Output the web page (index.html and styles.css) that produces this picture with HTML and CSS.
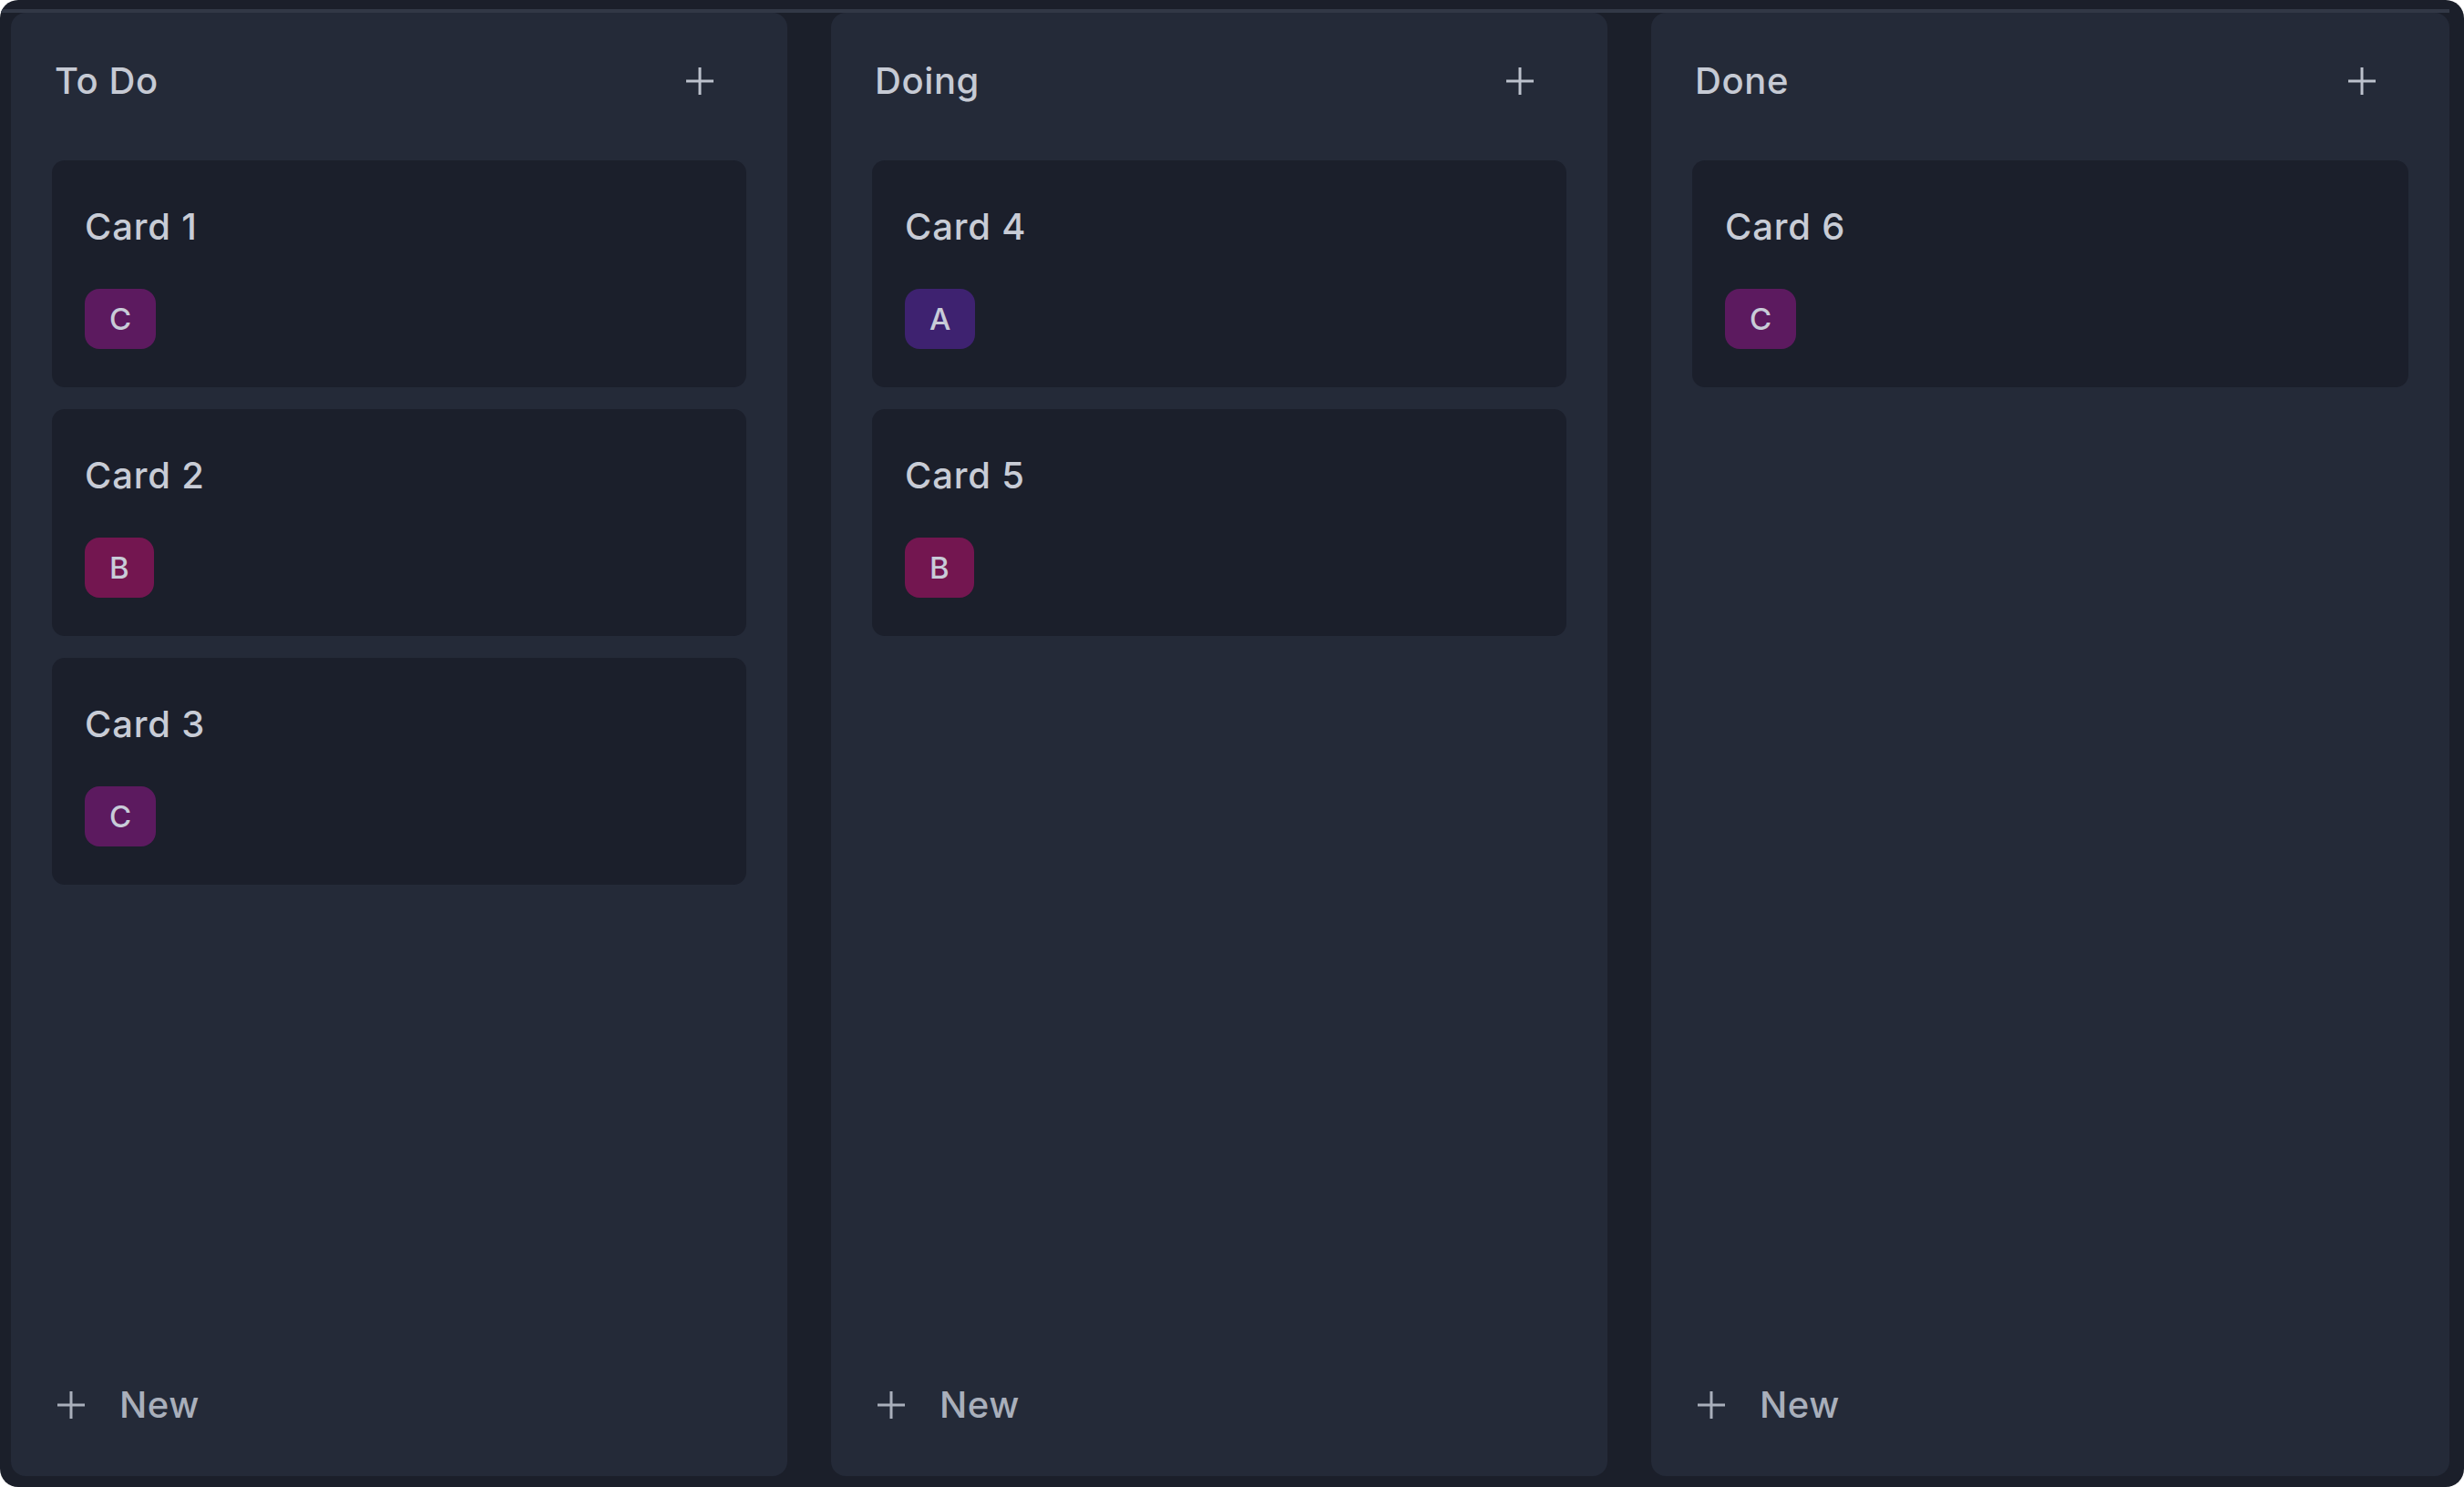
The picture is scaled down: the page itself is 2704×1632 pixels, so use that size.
FILE: index.html
```html
<!DOCTYPE html>
<html lang="en">
<head>
<meta charset="utf-8">
<title>Board</title>
<link rel="stylesheet" href="styles.css">
</head>
<body>
<div class="app">
  <div class="rule"></div>
  <div class="board">
    <section class="column">
      <header class="col-head">
        <h2 class="col-title">To Do</h2>
        <button class="icon-btn" aria-label="Add"><svg viewBox="0 0 32 32" width="32" height="32"><path d="M16 1v30M1 16h30"/></svg></button>
      </header>
      <div class="cards">
        <article class="card"><h3 class="card-title">Card 1</h3><span class="badge badge-c">C</span></article>
        <article class="card"><h3 class="card-title">Card 2</h3><span class="badge badge-b">B</span></article>
        <article class="card"><h3 class="card-title">Card 3</h3><span class="badge badge-c">C</span></article>
      </div>
      <button class="new-btn"><svg viewBox="0 0 32 32" width="32" height="32"><path d="M16 1v30M1 16h30"/></svg><span>New</span></button>
    </section>
    <section class="column">
      <header class="col-head">
        <h2 class="col-title">Doing</h2>
        <button class="icon-btn" aria-label="Add"><svg viewBox="0 0 32 32" width="32" height="32"><path d="M16 1v30M1 16h30"/></svg></button>
      </header>
      <div class="cards">
        <article class="card"><h3 class="card-title">Card 4</h3><span class="badge badge-a">A</span></article>
        <article class="card"><h3 class="card-title">Card 5</h3><span class="badge badge-b">B</span></article>
      </div>
      <button class="new-btn"><svg viewBox="0 0 32 32" width="32" height="32"><path d="M16 1v30M1 16h30"/></svg><span>New</span></button>
    </section>
    <section class="column">
      <header class="col-head">
        <h2 class="col-title">Done</h2>
        <button class="icon-btn" aria-label="Add"><svg viewBox="0 0 32 32" width="32" height="32"><path d="M16 1v30M1 16h30"/></svg></button>
      </header>
      <div class="cards">
        <article class="card"><h3 class="card-title">Card 6</h3><span class="badge badge-c">C</span></article>
      </div>
      <button class="new-btn"><svg viewBox="0 0 32 32" width="32" height="32"><path d="M16 1v30M1 16h30"/></svg><span>New</span></button>
    </section>
  </div>
</div>
</body>
</html>
```

FILE: styles.css
```css
* { box-sizing: border-box; }
html, body { margin: 0; padding: 0; background: #ffffff; }
body { font-family: "Inter", "Noto Sans", sans-serif; color: #c6cad4; }

.app {
  width: 2704px;
  height: 1632px;
  background: #1b1f2a;
  border-radius: 20px;
  overflow: hidden;
  display: flex;
  flex-direction: column;
}

.rule {
  height: 4px;
  margin: 10px 16px 0 0;
  background: #323846;
}

.board {
  flex: 1;
  display: grid;
  grid-template-columns: 852px 852px 1fr;
  gap: 48px;
  padding: 0 16px 12px 12px;
}

.column {
  background: #242a38;
  border-radius: 16px;
  padding: 0 45px 48px;
  display: flex;
  flex-direction: column;
}

.col-head {
  height: 150px;
  display: flex;
  align-items: center;
  justify-content: space-between;
  padding: 0 27px 0 3px;
}

.col-title {
  margin: 0;
  font-size: 40px;
  font-weight: 500;
  letter-spacing: 0.6px;
  line-height: 56px;
  color: #c6cad4;
}

.icon-btn {
  width: 48px;
  height: 48px;
  border: 0;
  background: none;
  padding: 0;
  display: flex;
  align-items: center;
  justify-content: center;
}

svg path {
  stroke: #bcc1cc;
  stroke-width: 3;
  fill: none;
}

.cards {
  margin-top: 12px;
  display: flex;
  flex-direction: column;
  gap: 24px;
  flex: 1;
}

.card {
  background: #1b1f2b;
  border-radius: 14px;
  padding: 45px 36px 42px;
  display: flex;
  flex-direction: column;
  align-items: flex-start;
}

.card-title {
  margin: 0 0 40px;
  font-size: 40px;
  font-weight: 500;
  letter-spacing: 0.8px;
  line-height: 56px;
  color: #c8ccd6;
}

.badge {
  height: 66px;
  padding: 0 27px;
  border-radius: 16px;
  display: inline-flex;
  align-items: center;
  justify-content: center;
  font-size: 33px;
  font-weight: 500;
  color: #c8ccd8;
}

.badge-c { background: #5c1a5f; }
.badge-b { background: #731650; }
.badge-a { background: #3e2270; }

.new-btn {
  height: 60px;
  border: 0;
  background: none;
  padding: 0 0 0 5px;
  display: flex;
  align-items: center;
  gap: 37px;
  font-family: inherit;
  font-size: 40px;
  font-weight: 500;
  letter-spacing: 0.6px;
  line-height: 60px;
  color: #a9afbb;
  cursor: pointer;
}

.new-btn svg path { stroke: #a9afbb; }
```
